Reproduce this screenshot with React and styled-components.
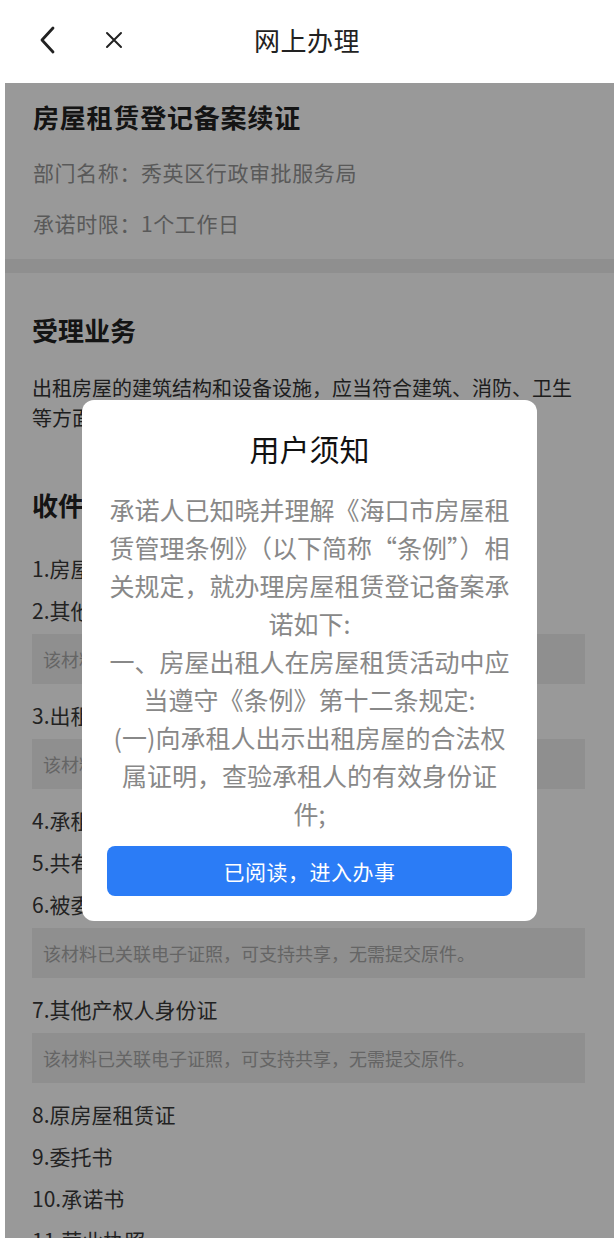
import styled, { createGlobalStyle } from 'styled-components';

const GlobalStyle = createGlobalStyle`
  html, body {
    margin: 0;
    padding: 0;
    background: #ffffff;
    font-family: "Noto Sans CJK SC", "Noto Sans", sans-serif;
  }
  * { box-sizing: border-box; }
`;

const Page = styled.div`
  width: 614px;
  min-height: 1238px;
  background: #ffffff;
  overflow: hidden;
`;

const Header = styled.div`
  height: 83px;
  display: grid;
  grid-template-columns: 1fr auto 1fr;
  align-items: center;
  background: #ffffff;
`;

const HeaderLeft = styled.div`
  display: flex;
  align-items: center;
  gap: 47px;
  padding-left: 38px;
`;

const HeaderTitle = styled.div`
  font-size: 26px;
  color: #222222;
  line-height: 36px;
  letter-spacing: 0.5px;
  margin-top: -4px;
`;

const IconButton = styled.span`
  display: flex;
  align-items: center;
  justify-content: center;
  color: #222222;
  margin-top: -4px;
`;

const InfoSection = styled.section`
  padding: 16px 29px 21px 33px;
`;

const Band = styled.div`
  height: 14px;
  margin-left: 5px;
  background: #eeeeee;
`;

const Section = styled.section`
  padding: 39px 29px 0 32px;
`;

const MainTitle = styled.h1`
  margin: 0;
  font-size: 26px;
  line-height: 36px;
  font-weight: 700;
  color: #222222;
  letter-spacing: 0.8px;
`;

const SectionTitle = styled.h2`
  margin: ${(p) => p.$top || 0}px 0 0;
  font-size: 26px;
  line-height: 36px;
  font-weight: 700;
  color: #222222;
`;

const InfoLine = styled.div`
  margin-top: ${(p) => p.$top}px;
  font-size: 21px;
  line-height: 30px;
  color: #959595;
  letter-spacing: 0.6px;
`;

const Paragraph = styled.p`
  margin: 25px 0 0;
  font-size: 20px;
  line-height: 30px;
  color: #333333;
`;

const MaterialList = styled.div`
  margin-top: 24px;
`;

const Material = styled.div`
  font-size: 21px;
  line-height: 42px;
  color: #3a3a3a;
`;

const Note = styled.div`
  margin: 3px 0 10px;
  height: 50px;
  display: flex;
  align-items: center;
  padding-left: 11px;
  background: #eeeeee;
  font-size: 18px;
  color: #a8a8a8;
`;

const Mask = styled.div`
  position: fixed;
  top: 83px;
  left: 5px;
  right: 0;
  bottom: 0;
  background: rgba(0, 0, 0, 0.4);
  display: flex;
  align-items: center;
  justify-content: center;
`;

const Dialog = styled.div`
  width: 455px;
  background: #ffffff;
  border-radius: 12px;
  padding: 28px 25px 25px;
  display: flex;
  flex-direction: column;
  align-items: center;
`;

const DialogTitle = styled.div`
  font-size: 30px;
  line-height: 40px;
  color: #111111;
`;

const DialogBody = styled.div`
  margin-top: 22px;
  width: 100%;
  text-align: center;
  font-size: 25px;
  line-height: 38px;
  color: #888888;
`;

const BodyLine = styled.div`
  white-space: nowrap;
`;

const PrimaryButton = styled.button`
  margin-top: 14px;
  width: 100%;
  height: 50px;
  border: none;
  border-radius: 8px;
  background: #2b7cf6;
  color: #ffffff;
  font-family: inherit;
  font-size: 21px;
  letter-spacing: 0.5px;
  cursor: pointer;
`;

const noteText = '该材料已关联电子证照，可支持共享，无需提交原件。';

const materials = [
  { name: '1.房屋所有权证' },
  { name: '2.其他产权人同意出租证明', note: true },
  { name: '3.出租人身份证', note: true },
  { name: '4.承租人身份证' },
  { name: '5.共有人同意出租证明' },
  { name: '6.被委托人身份证', note: true },
  { name: '7.其他产权人身份证', note: true },
  { name: '8.原房屋租赁证' },
  { name: '9.委托书' },
  { name: '10.承诺书' },
  { name: '11.营业执照' },
];

const noticeLines = [
  '承诺人已知晓并理解《海口市房屋租',
  '赁管理条例》（以下简称“条例”）相',
  '关规定，就办理房屋租赁登记备案承',
  '诺如下:',
  '一、房屋出租人在房屋租赁活动中应',
  '当遵守《条例》第十二条规定:',
  '(一)向承租人出示出租房屋的合法权',
  '属证明，查验承租人的有效身份证',
  '件;',
];

const App = () => {
  return (
    <Page>
      <GlobalStyle />
      <Header>
        <HeaderLeft>
          <IconButton>
            <svg width="20" height="28" viewBox="0 0 20 28" fill="none">
              <path d="M15 2 L4 14 L15 26" stroke="#222" strokeWidth="2.8" strokeLinecap="round" strokeLinejoin="round" />
            </svg>
          </IconButton>
          <IconButton>
            <svg width="18" height="18" viewBox="0 0 18 18" fill="none">
              <path d="M2 2 L16 16 M16 2 L2 16" stroke="#222" strokeWidth="2" strokeLinecap="round" />
            </svg>
          </IconButton>
        </HeaderLeft>
        <HeaderTitle>网上办理</HeaderTitle>
        <div />
      </Header>

      <InfoSection>
        <MainTitle>房屋租赁登记备案续证</MainTitle>
        <InfoLine $top={22}>部门名称：秀英区行政审批服务局</InfoLine>
        <InfoLine $top={21}>承诺时限：1个工作日</InfoLine>
      </InfoSection>
      <Band />

      <Section>
        <SectionTitle>受理业务</SectionTitle>
        <Paragraph>
          出租房屋的建筑结构和设备设施，应当符合建筑、消防、卫生等方面的有关规定，不得危及承租人的人身安全。
        </Paragraph>
        <SectionTitle $top={54}>收件材料</SectionTitle>
        <MaterialList>
          {materials.map((m) => (
            <div key={m.name}>
              <Material>{m.name}</Material>
              {m.note && <Note>{noteText}</Note>}
            </div>
          ))}
        </MaterialList>
      </Section>

      <Mask>
        <Dialog>
          <DialogTitle>用户须知</DialogTitle>
          <DialogBody>
            {noticeLines.map((line) => (
              <BodyLine key={line}>{line}</BodyLine>
            ))}
          </DialogBody>
          <PrimaryButton>已阅读，进入办事</PrimaryButton>
        </Dialog>
      </Mask>
    </Page>
  );
};

export default App;
